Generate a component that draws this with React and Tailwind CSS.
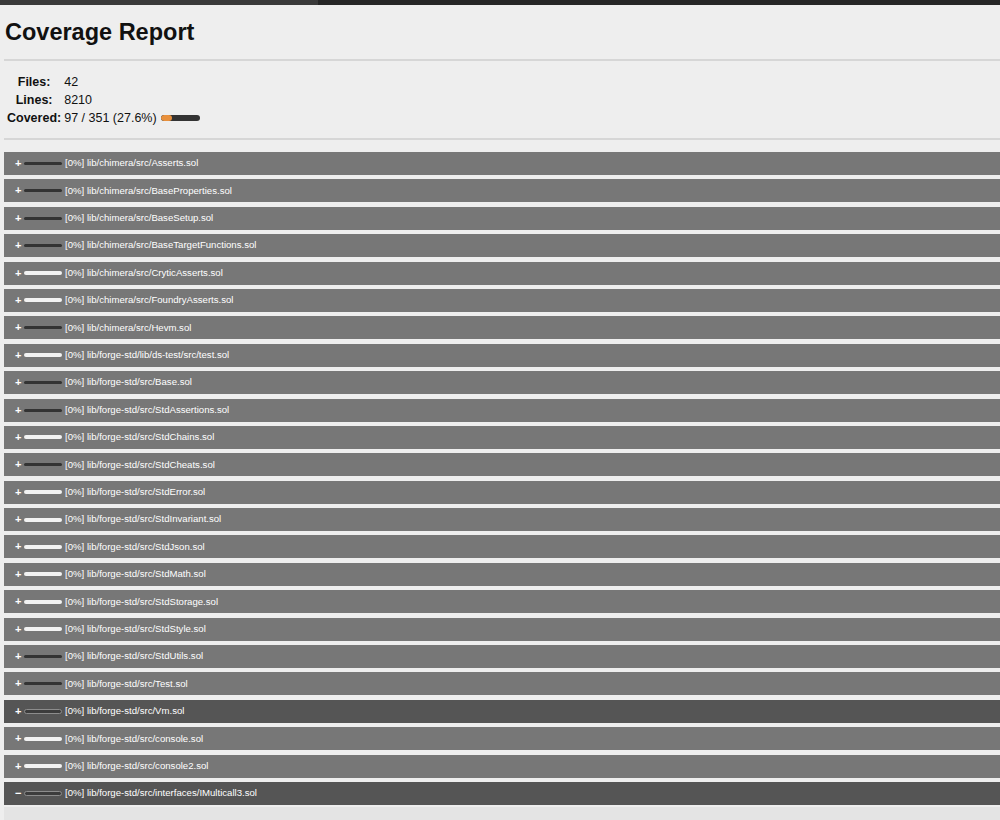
import React from "react";

const rows = [
  ["lib/chimera/src/Asserts.sol", "d"],
  ["lib/chimera/src/BaseProperties.sol", "d"],
  ["lib/chimera/src/BaseSetup.sol", "d"],
  ["lib/chimera/src/BaseTargetFunctions.sol", "d"],
  ["lib/chimera/src/CryticAsserts.sol", "w"],
  ["lib/chimera/src/FoundryAsserts.sol", "w"],
  ["lib/chimera/src/Hevm.sol", "d"],
  ["lib/forge-std/lib/ds-test/src/test.sol", "w"],
  ["lib/forge-std/src/Base.sol", "d"],
  ["lib/forge-std/src/StdAssertions.sol", "d"],
  ["lib/forge-std/src/StdChains.sol", "w"],
  ["lib/forge-std/src/StdCheats.sol", "d"],
  ["lib/forge-std/src/StdError.sol", "w"],
  ["lib/forge-std/src/StdInvariant.sol", "w"],
  ["lib/forge-std/src/StdJson.sol", "w"],
  ["lib/forge-std/src/StdMath.sol", "w"],
  ["lib/forge-std/src/StdStorage.sol", "w"],
  ["lib/forge-std/src/StdStyle.sol", "w"],
  ["lib/forge-std/src/StdUtils.sol", "d"],
  ["lib/forge-std/src/Test.sol", "d"],
  ["lib/forge-std/src/Vm.sol", "o"],
  ["lib/forge-std/src/console.sol", "w"],
  ["lib/forge-std/src/console2.sol", "w"],
  ["lib/forge-std/src/interfaces/IMulticall3.sol", "o"],
];

function Bar({ kind }) {
  if (kind === "w")
    return <div className="w-[38px] h-[4px] rounded-full bg-[#f2f2f2]" />;
  if (kind === "d")
    return <div className="w-[38px] h-[3px] rounded-full bg-[#333333]" />;
  return (
    <div className="w-[38px] h-[5px] rounded-full bg-[#3c3c3c] border border-[#8c8c8c]" />
  );
}

export default function App() {
  return (
    <div
      className="min-h-[820px] bg-[#eeeeee] text-[#111] overflow-hidden"
      style={{ fontFamily: '"Liberation Sans", Arial, Helvetica, sans-serif' }}
    >
      <div className="flex h-[5px]">
        <div className="w-[318px] bg-[#3a3a3a]" />
        <div className="flex-1 bg-[#262626]" />
      </div>
      <div className="pl-[5px] pt-[13px]">
        <h1 className="text-[23.5px] font-bold leading-[28px] m-0">Coverage Report</h1>
      </div>
      <div className="ml-[4px] mt-[13px] h-[2px] bg-[#d6d6d6]" />
      <table className="mt-[12px] ml-[6px] text-[12.5px] leading-[18px] border-separate border-spacing-0">
        <tbody>
          <tr className="h-[18px]">
            <th className="font-bold text-center px-[1px]">Files:</th>
            <td className="pl-[2px]">42</td>
          </tr>
          <tr className="h-[18px]">
            <th className="font-bold text-center px-[1px]">Lines:</th>
            <td className="pl-[2px]">8210</td>
          </tr>
          <tr className="h-[18px]">
            <th className="font-bold text-center px-[1px]">Covered:</th>
            <td className="pl-[2px]">
              <div className="flex items-center gap-[4px]">
                <span>97 / 351 (27.6%)</span>
                <div className="w-[39px] h-[6px] rounded-full bg-[#333333] overflow-hidden flex">
                  <div className="w-[11px] h-full bg-[#e8903c] rounded-full" />
                </div>
              </div>
            </td>
          </tr>
        </tbody>
      </table>
      <div className="ml-[4px] mt-[11px] h-[2px] bg-[#d6d6d6]" />
      <div className="mt-[12px] pl-[4px] flex flex-col gap-[4.4px]">
        {rows.map(([name, kind], i) => {
          const dark = kind === "o";
          const last = i === rows.length - 1;
          return (
            <div
              key={name}
              className={`h-[23px] w-[1010px] flex items-center text-white text-[9.6px] ${
                dark ? "bg-[#555555]" : "bg-[#777777]"
              }`}
            >
              <span className="w-[20px] pl-[11px] font-bold text-[11px] leading-none">
                {last ? "−" : "+"}
              </span>
              <Bar kind={kind} />
              <span className="ml-[3px]">[0%] {name}</span>
            </div>
          );
        })}
      </div>
      <div className="mt-[2px] ml-[4px] h-[40px] bg-[#e4e4e4]" />
    </div>
  );
}
